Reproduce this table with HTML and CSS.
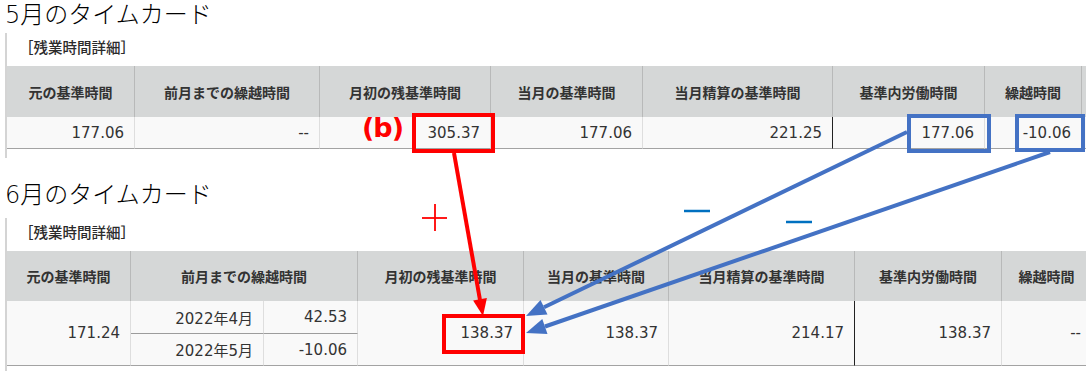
FILE: index.html
```html
<!DOCTYPE html>
<html lang="ja">
<head>
<meta charset="utf-8">
<title>タイムカード</title>
<link rel="stylesheet" href="styles.css">
</head>
<body>
<div class="page">
  <section class="card">
    <h2 class="title">5月のタイムカード</h2>
    <div class="panel">
      <div class="caption">［残業時間詳細］</div>
      <div class="grid grid--may">
        <div class="th">元の基準時間</div>
        <div class="th">前月までの繰越時間</div>
        <div class="th">月初の残基準時間</div>
        <div class="th">当月の基準時間</div>
        <div class="th">当月精算の基準時間</div>
        <div class="th">基準内労働時間</div>
        <div class="th">繰越時間</div>
        <div class="th"></div>
        <div class="td">177.06</div>
        <div class="td">--</div>
        <div class="td">305.37</div>
        <div class="td">177.06</div>
        <div class="td td--dark">221.25</div>
        <div class="td">177.06</div>
        <div class="td">-10.06</div>
        <div class="td"></div>
      </div>
    </div>
  </section>

  <section class="card card--june">
    <h2 class="title">6月のタイムカード</h2>
    <div class="panel">
      <div class="caption">［残業時間詳細］</div>
      <div class="grid grid--june">
        <div class="th">元の基準時間</div>
        <div class="th th--span">前月までの繰越時間</div>
        <div class="th">月初の残基準時間</div>
        <div class="th">当月の基準時間</div>
        <div class="th">当月精算の基準時間</div>
        <div class="th">基準内労働時間</div>
        <div class="th">繰越時間</div>
        <div class="th"></div>
        <div class="td td--tall">171.24</div>
        <div class="td td--sub">2022年4月</div>
        <div class="td td--sub">42.53</div>
        <div class="td td--tall">138.37</div>
        <div class="td td--tall">138.37</div>
        <div class="td td--tall td--dark">214.17</div>
        <div class="td td--tall">138.37</div>
        <div class="td td--tall">--</div>
        <div class="td td--tall"></div>
        <div class="td">2022年5月</div>
        <div class="td">-10.06</div>
      </div>
    </div>
  </section>

  <span class="label-b">(b)</span>

  <svg class="overlay" width="1086" height="371" viewBox="0 0 1086 371" xmlns="http://www.w3.org/2000/svg">
    <rect x="414" y="115" width="79" height="36" fill="none" stroke="#ff0000" stroke-width="4"/>
    <rect x="909" y="116" width="80" height="35" fill="none" stroke="#4472c4" stroke-width="4"/>
    <rect x="1017" y="116" width="66" height="34" fill="none" stroke="#4472c4" stroke-width="4"/>
    <rect x="444" y="316" width="79" height="36" fill="none" stroke="#ff0000" stroke-width="4"/>

    <line x1="454" y1="153" x2="480" y2="300" stroke="#ff0000" stroke-width="4"/>
    <polygon points="483,316 486.9,298.1 473.1,300.5" fill="#ff0000"/>

    <line x1="907" y1="132" x2="544" y2="307.3" stroke="#4472c4" stroke-width="4"/>
    <polygon points="526,316 547.5,314.5 540.5,300.1" fill="#4472c4"/>
    <line x1="1050" y1="152" x2="545" y2="326.5" stroke="#4472c4" stroke-width="4"/>
    <polygon points="526,333 547.5,334.1 542.3,318.9" fill="#4472c4"/>

    <line x1="422" y1="218" x2="447" y2="218" stroke="#ff0000" stroke-width="1.8"/>
    <line x1="435" y1="204" x2="435" y2="231" stroke="#ff0000" stroke-width="1.8"/>
    <line x1="684" y1="211" x2="710" y2="211" stroke="#0070c0" stroke-width="2.5"/>
    <line x1="786" y1="222" x2="812" y2="222" stroke="#0070c0" stroke-width="2.5"/>
  </svg>
</div>
</body>
</html>
```

FILE: styles.css
```css
* {
  box-sizing: border-box;
}

html,
body {
  margin: 0;
  padding: 0;
  background: #ffffff;
}

body {
  width: 1086px;
  height: 371px;
  overflow: hidden;
  font-family: "Noto Sans CJK JP", sans-serif;
  color: #333333;
}

.page {
  position: relative;
  width: 1086px;
  height: 371px;
  overflow: hidden;
}

.card--june {
  margin-top: 22px;
}

.title {
  margin: 0 0 3px;
  padding-left: 5px;
  font-family: "DejaVu Sans", "Noto Sans CJK JP", sans-serif;
  font-size: 24px;
  font-weight: 300;
  line-height: 30px;
  color: #000000;
}

.card--june .title {
  margin-bottom: 8px;
}

.panel {
  margin-left: 5px;
  border-left: 2px solid #d4d4d4;
  padding-bottom: 9px;
}

.caption {
  padding-left: 12px;
  padding-bottom: 5px;
  font-size: 14.5px;
  font-weight: 500;
  line-height: 28px;
  color: #2b2b2b;
}

.grid {
  display: grid;
  width: max-content;
}

.grid--may {
  grid-template-columns: 128px 185px 171px 152px 190px 152px 97px 100px;
  grid-template-rows: 51px 32px;
}

.grid--june {
  grid-template-columns: 124px 133px 94px 166px 145px 186px 147px 90px 100px;
  grid-template-rows: 50px 33px 32px;
}

.th {
  display: flex;
  align-items: center;
  justify-content: center;
  background: #d5d7d7;
  border-right: 1px solid #b8b9b9;
  font-size: 14px;
  font-weight: 700;
  color: #333333;
  white-space: nowrap;
}

.th--span {
  grid-column: span 2;
}

.td {
  display: flex;
  align-items: center;
  justify-content: flex-end;
  padding-right: 10px;
  background: #f9f9f9;
  border-right: 1px solid #dedede;
  border-bottom: 1px solid #a3a3a3;
  font-family: "DejaVu Sans", "Noto Sans CJK JP", sans-serif;
  font-size: 15px;
  color: #333333;
  white-space: nowrap;
}

.td--tall {
  grid-row: span 2;
}

.td--sub {
  border-bottom-color: #9c9c9c;
}

.td--dark {
  border-right-color: #222222;
}

.label-b {
  position: absolute;
  left: 362px;
  top: 114px;
  font-family: "DejaVu Sans", sans-serif;
  font-weight: 700;
  font-size: 27px;
  line-height: 27px;
  letter-spacing: -1px;
  color: #ff0000;
}

.overlay {
  position: absolute;
  left: 0;
  top: 0;
  pointer-events: none;
}
```
